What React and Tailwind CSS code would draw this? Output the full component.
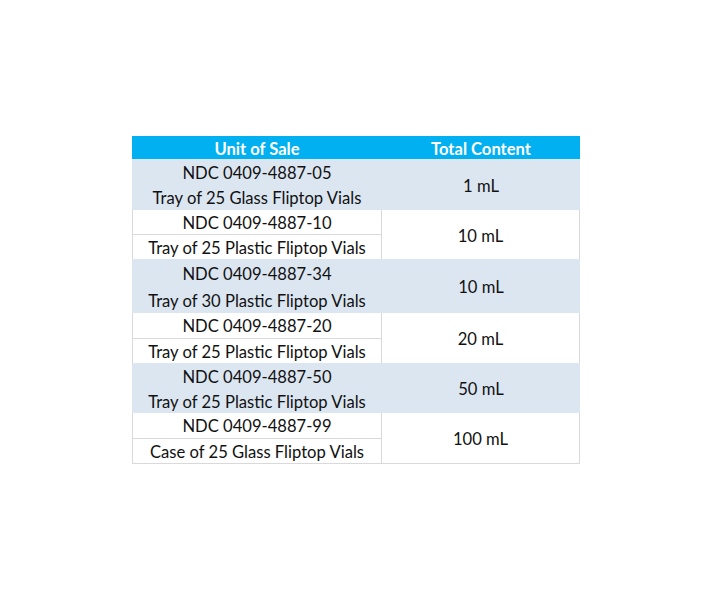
import React from "react";

const rows = [
  { ndc: "NDC 0409-4887-05", desc: "Tray of 25 Glass Fliptop Vials", total: "1 mL", shaded: true, h: "h-[51px]" },
  { ndc: "NDC 0409-4887-10", desc: "Tray of 25 Plastic Fliptop Vials", total: "10 mL", shaded: false, h: "h-[49px]" },
  { ndc: "NDC 0409-4887-34", desc: "Tray of 30 Plastic Fliptop Vials", total: "10 mL", shaded: true, h: "h-[54px]" },
  { ndc: "NDC 0409-4887-20", desc: "Tray of 25 Plastic Fliptop Vials", total: "20 mL", shaded: false, h: "h-[50px]" },
  { ndc: "NDC 0409-4887-50", desc: "Tray of 25 Plastic Fliptop Vials", total: "50 mL", shaded: true, h: "h-[50px]" },
  { ndc: "NDC 0409-4887-99", desc: "Case of 25 Glass Fliptop Vials", total: "100 mL", shaded: false, h: "h-[51px]" },
];

export default function App() {
  return (
    <div className="w-[710px] h-[599px] bg-white pt-[136px] pl-[132px] font-['Lato','Open_Sans',sans-serif] text-[16.6px] leading-[20px] text-[#111]">
      <div className="w-[448px]">
        {/* Header */}
        <div className="flex h-[23px] bg-[#00b0f0] text-white font-bold">
          <div className="w-[250px] flex items-center justify-center pt-[2px]">Unit of Sale</div>
          <div className="flex-1 flex items-center justify-center pt-[2px]">Total Content</div>
        </div>

        {rows.map((r, i) =>
          r.shaded ? (
            <div key={i} className={`flex bg-[#dce6f1] ${r.h}`}>
              <div className="w-[250px] flex flex-col">
                <div className="flex-1 min-h-0 flex items-center justify-center pt-[2px]">{r.ndc}</div>
                <div className="flex-1 min-h-0 flex items-center justify-center pt-[2px]">{r.desc}</div>
              </div>
              <div className="flex-1 flex items-center justify-center pt-[2px]">{r.total}</div>
            </div>
          ) : (
            <div
              key={i}
              className={`flex bg-white border-x border-[#d9d9d9] ${r.h} ${i === rows.length - 1 ? "border-b" : ""}`}
            >
              <div className="w-[249px] flex flex-col border-r border-[#d9d9d9]">
                <div className="flex-1 min-h-0 flex items-center justify-center pt-[2px] border-b border-[#d9d9d9]">{r.ndc}</div>
                <div className="flex-1 min-h-0 flex items-center justify-center pt-[2px]">{r.desc}</div>
              </div>
              <div className="flex-1 flex items-center justify-center pt-[2px]">{r.total}</div>
            </div>
          )
        )}
      </div>
    </div>
  );
}
